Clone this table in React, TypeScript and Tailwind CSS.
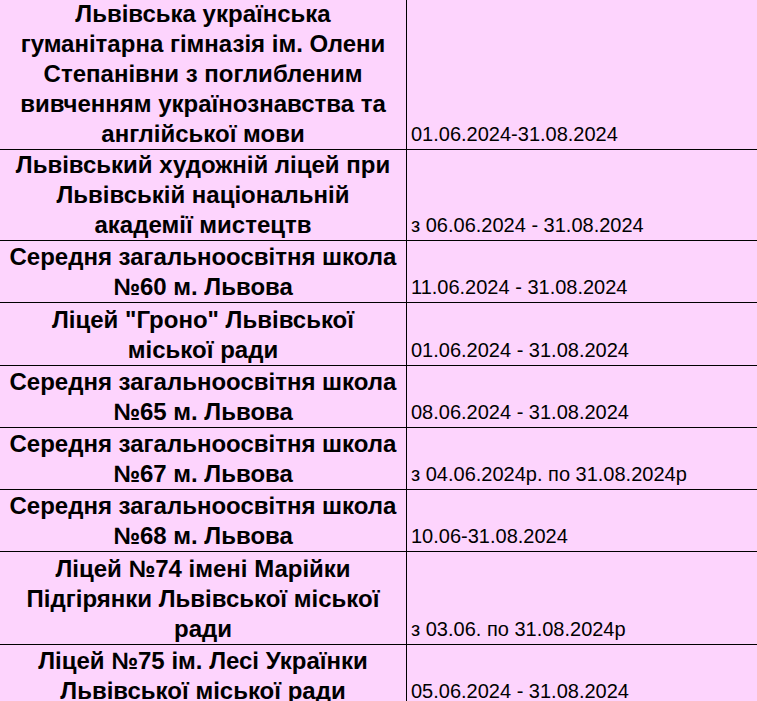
const rows: { name: string[]; period: string; h: string }[] = [
  {
    name: [
      "Львівська українська",
      "гуманітарна гімназія ім. Олени",
      "Степанівни з поглибленим",
      "вивченням українознавства та",
      "англійської мови",
    ],
    period: "01.06.2024-31.08.2024",
    h: "h-[150px]",
  },
  {
    name: ["Львівський художній ліцей при", "Львівській національній", "академії мистецтв"],
    period: "з 06.06.2024 - 31.08.2024",
    h: "h-[91px]",
  },
  {
    name: ["Середня загальноосвітня школа", "№60 м. Львова"],
    period: "11.06.2024 - 31.08.2024",
    h: "h-[62px]",
  },
  {
    name: ['Ліцей "Гроно" Львівської', "міської ради"],
    period: "01.06.2024 - 31.08.2024",
    h: "h-[63px]",
  },
  {
    name: ["Середня загальноосвітня школа", "№65 м. Львова"],
    period: "08.06.2024 - 31.08.2024",
    h: "h-[62px]",
  },
  {
    name: ["Середня загальноосвітня школа", "№67 м. Львова"],
    period: "з 04.06.2024р. по 31.08.2024р",
    h: "h-[62px]",
  },
  {
    name: ["Середня загальноосвітня школа", "№68 м. Львова"],
    period: "10.06-31.08.2024",
    h: "h-[62px]",
  },
  {
    name: ["Ліцей №74 імені Марійки", "Підгірянки Львівської міської", "ради"],
    period: "з 03.06. по 31.08.2024р",
    h: "h-[93px]",
  },
  {
    name: ["Ліцей №75 ім. Лесі Українки", "Львівської міської ради"],
    period: "05.06.2024 - 31.08.2024",
    h: "h-[62px]",
  },
];

export default function App() {
  return (
    <div className="w-[757px] h-[701px] overflow-hidden bg-[#fdd4fd] text-black font-['Liberation_Sans',Arial,sans-serif]">
      {rows.map((row, i) => (
        <div
          key={i}
          className={`grid grid-cols-[407px_1fr] border-b border-black ${row.h} box-border`}
        >
          <div className="flex flex-col justify-end items-center border-r border-black overflow-hidden">
            {row.name.map((line, j) => (
              <div key={j} className="whitespace-nowrap text-[24px] font-bold leading-[30px]">
                {line}
              </div>
            ))}
          </div>
          <div className="flex flex-col justify-end pl-[4px] overflow-hidden">
            <div className="whitespace-nowrap text-[20px] leading-[30px]">{row.period}</div>
          </div>
        </div>
      ))}
    </div>
  );
}
